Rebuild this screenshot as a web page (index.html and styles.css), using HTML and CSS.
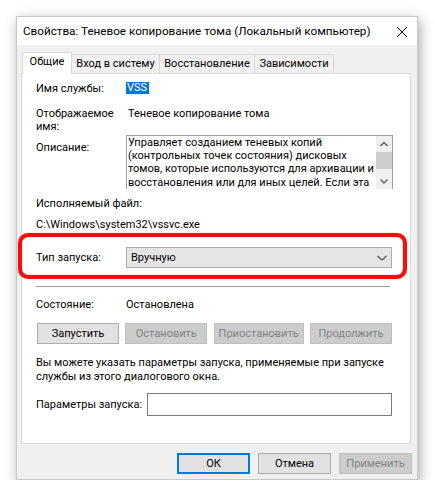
FILE: index.html
```html
<!DOCTYPE html>
<html lang="ru">
<head>
<meta charset="utf-8">
<title>Свойства</title>
<link rel="stylesheet" href="styles.css">
</head>
<body>
<div class="window">
  <div class="titlebar">
    <span class="title">Свойства: Теневое копирование тома (Локальный компьютер)</span>
    <svg class="close" width="12" height="12" viewBox="0 0 12 12"><path d="M1 1 L11 11 M11 1 L1 11" stroke="#000" stroke-width="1" fill="none"/></svg>
  </div>
  <div class="body">
    <div class="tabs">
      <div class="tab active t1">Общие</div>
      <div class="tab t2">Вход в систему</div>
      <div class="tab t3">Восстановление</div>
      <div class="tab t4">Зависимости</div>
    </div>
    <div class="panel">
      <div class="row r-name">
        <div class="label">Имя службы:</div>
        <div class="value"><span class="sel">VSS</span></div>
      </div>
      <div class="row r-disp">
        <div class="label">Отображаемое<br>имя:</div>
        <div class="value">Теневое копирование тома</div>
      </div>
      <div class="row r-desc">
        <div class="label">Описание:</div>
        <div class="descbox">
          <div class="desctext">Управляет созданием теневых копий<br>(контрольных точек состояния) дисковых<br>томов, которые используются для архивации и<br>восстановления или для иных целей. Если эта</div>
          <div class="scroll">
            <svg class="arr" width="16" height="16" viewBox="0 0 16 16"><path d="M4.5 10 L8 6.5 L11.5 10" stroke="#606060" stroke-width="1.4" fill="none"/></svg>
            <div class="thumb"></div>
            <div class="track"></div>
            <svg class="arr" width="16" height="16" viewBox="0 0 16 16"><path d="M4.5 6.5 L8 10 L11.5 6.5" stroke="#606060" stroke-width="1.4" fill="none"/></svg>
          </div>
        </div>
      </div>
      <div class="line r-exe">Исполняемый файл:</div>
      <div class="line r-path">C:\Windows\system32\vssvc.exe</div>
      <div class="row r-start">
        <div class="label">Тип запуска:</div>
        <div class="combo">
          <span>Вручную</span>
          <svg width="12" height="8" viewBox="0 0 12 8"><path d="M1.5 2 L6 6 L10.5 2" stroke="#505050" stroke-width="1.2" fill="none"/></svg>
        </div>
        <div class="ring"></div>
      </div>
      <div class="sep"></div>
      <div class="row r-state">
        <div class="label">Состояние:</div>
        <div class="value">Остановлена</div>
      </div>
      <div class="btnrow">
        <div class="btn w82">Запустить</div>
        <div class="btn w82 dis">Остановить</div>
        <div class="btn w90 dis">Приостановить</div>
        <div class="btn w82 dis">Продолжить</div>
      </div>
      <div class="para">Вы можете указать параметры запуска, применяемые при запуске<br>службы из этого диалогового окна.</div>
      <div class="row r-params">
        <div class="plabel">Параметры запуска:</div>
        <div class="input"></div>
      </div>
    </div>
    <div class="footer">
      <div class="btn fbtn ok">ОК</div>
      <div class="btn fbtn">Отмена</div>
      <div class="btn fbtn dis">Применить</div>
    </div>
  </div>
</div>
</body>
</html>
```
FILE: styles.css
```css
html, body {
  margin: 0;
  padding: 0;
  background: #ffffff;
}
body {
  font-family: Roboto, "Noto Sans", sans-serif;
  font-size: 11px;
  color: #000;
}
.window {
  margin: 16px 0 0 16px;
  width: 400px;
  height: 462px;
  border: 1px solid #c8c8c8;
  background: #f0f0f0;
  box-shadow: 2px 4px 12px rgba(0,0,0,0.35);
  display: flex;
  flex-direction: column;
}
.titlebar {
  height: 28px;
  background: #ffffff;
  display: flex;
  align-items: center;
  justify-content: space-between;
  padding: 0 9px 0 6px;
}
.title {
  font-size: 11.7px;
  line-height: 14px;
  white-space: nowrap;
}
.close {
  display: block;
  margin-top: 1px;
}
.body {
  flex: 1;
  display: flex;
  flex-direction: column;
  padding: 7px 5px 0 4px;
}
.tabs {
  display: flex;
  height: 21px;
  align-items: flex-end;
  padding-left: 1px;
  position: relative;
  z-index: 1;
}
.tab {
  box-sizing: border-box;
  height: 19px;
  border: 1px solid #d9d9d9;
  border-bottom: none;
  border-left: none;
  background: #f0f0f0;
  display: flex;
  align-items: center;
  justify-content: center;
  line-height: 14px;
  padding-bottom: 1px;
  white-space: nowrap;
}
.tab.active {
  height: 22px;
  margin-bottom: -1px;
  background: #ffffff;
  border-left: 1px solid #d9d9d9;
  padding-bottom: 4px;
}
.t1 { width: 50px; }
.t2 { width: 88px; }
.t3 { width: 95px; }
.t4 { width: 79px; }
.panel {
  width: 390px;
  box-sizing: border-box;
  height: 371px;
  background: #ffffff;
  border: 1px solid #d9d9d9;
  padding: 7px 18px 0 14px;
  display: flex;
  flex-direction: column;
}
.row {
  display: flex;
  position: relative;
}
.label {
  width: 90px;
  line-height: 13px;
  flex: none;
  white-space: nowrap;
}
.value {
  line-height: 14px;
  white-space: nowrap;
}
.r-name {
  height: 14px;
  align-items: center;
}
.sel {
  background: #0078d7;
  color: #fff;
  padding: 0 2px 0 1px;
  display: inline-block;
  line-height: 12px;
  height: 12px;
}
.r-disp {
  margin-top: 12px;
}
.r-disp .value {
  line-height: 13px;
  padding-left: 2px;
}
.r-desc {
  margin-top: 2px;
}
.r-desc .label {
  padding-top: 6px;
}
.descbox {
  flex: 1;
  height: 54px;
  box-sizing: border-box;
  border-top: 1px solid #a0a0a0;
  border-left: 1px solid #a0a0a0;
  border-right: 1px solid #a0a0a0;
  display: flex;
}
.desctext {
  flex: 1;
  padding: 0 2px 0 1px;
  line-height: 13.2px;
  white-space: nowrap;
}
.scroll {
  width: 16px;
  background: #f0f0f0;
  display: flex;
  flex-direction: column;
  flex: none;
}
.arr {
  display: block;
  flex: none;
}
.thumb {
  height: 17px;
  background: #cdcdcd;
  flex: none;
}
.track {
  flex: 1;
}
.line {
  line-height: 13px;
  white-space: nowrap;
}
.r-exe {
  margin-top: 8px;
}
.r-path {
  margin-top: 8px;
}
.r-start {
  margin-top: 16px;
  align-items: center;
}
.combo {
  flex: 1;
  box-sizing: border-box;
  height: 21px;
  background: #e5e5e5;
  border: 1px solid #adadad;
  display: flex;
  align-items: center;
  justify-content: space-between;
  padding: 0 3px 0 4px;
  line-height: 14px;
}
.combo svg {
  display: block;
}
.ring {
  position: absolute;
  left: -18px;
  right: -15px;
  top: -14px;
  bottom: -11px;
  border: 4px solid #ff0a0a;
  border-radius: 10px;
  box-shadow: 0 0 1px rgba(90,0,0,0.6), inset 0 0 1px rgba(90,0,0,0.6);
}
.sep {
  margin-top: 18px;
  height: 1px;
  background: #a0a0a0;
  margin-right: 2px;
}
.r-state {
  margin-top: 11px;
  line-height: 13px;
}
.btnrow {
  margin-top: 11px;
  margin-left: 1px;
  display: flex;
  justify-content: space-between;
}
.btn {
  box-sizing: border-box;
  height: 21px;
  background: #e1e1e1;
  border: 1px solid #adadad;
  display: flex;
  align-items: center;
  justify-content: center;
  line-height: 14px;
  white-space: nowrap;
}
.btn.dis {
  background: #cccccc;
  border-color: #bfbfbf;
  color: #838383;
}
.w82 { width: 82px; }
.w90 { width: 90px; }
.para {
  margin-top: 12px;
  line-height: 13.7px;
  white-space: nowrap;
}
.r-params {
  margin-top: 10px;
  align-items: center;
}
.plabel {
  width: 111px;
  flex: none;
  line-height: 13px;
  white-space: nowrap;
}
.input {
  flex: 1;
  height: 23px;
  box-sizing: border-box;
  border: 1px solid #7a7a7a;
  background: #fff;
}
.footer {
  margin-top: 9px;
  display: flex;
  justify-content: flex-end;
  gap: 8px;
  padding-right: 0;
}
.fbtn {
  width: 73px;
  height: 21px;
}
.fbtn.ok {
  border: 2px solid #0078d7;
}
```
